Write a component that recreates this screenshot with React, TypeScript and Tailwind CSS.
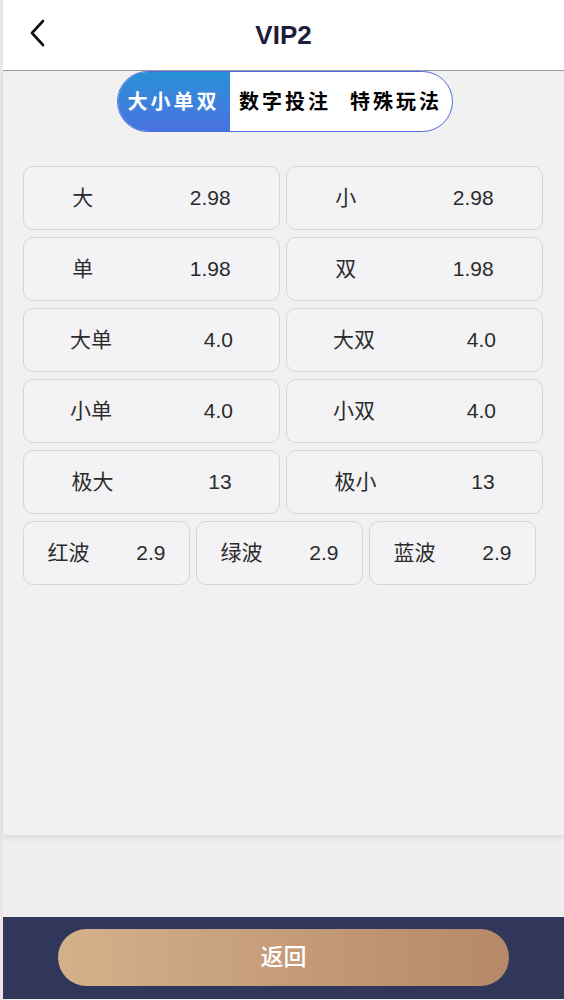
import React from "react";

const PAIRS: [string, string][][] = [
  [["大", "2.98"], ["小", "2.98"]],
  [["单", "1.98"], ["双", "1.98"]],
  [["大单", "4.0"], ["大双", "4.0"]],
  [["小单", "4.0"], ["小双", "4.0"]],
  [["极大", "13"], ["极小", "13"]],
];

const WAVES: [string, string][] = [
  ["红波", "2.9"],
  ["绿波", "2.9"],
  ["蓝波", "2.9"],
];

const FONT = { fontFamily: '"Liberation Sans", Arial, "Noto Sans CJK SC", sans-serif' };

function OddsCard({ label, odds, className }: { label: string; odds: string; className: string }) {
  return (
    <div
      className={`h-[64px] flex items-center justify-around bg-[#f3f3f5] border border-[#d6d6d6] rounded-[10px] text-[21px] text-[#2b2b2b] ${className}`}
    >
      <span>{label}</span>
      <span>{odds}</span>
    </div>
  );
}

export default function App() {
  const tabs = ["大小单双", "数字投注", "特殊玩法"];

  return (
    <div className="w-[564px] h-[1000px] flex flex-col border-l-[3px] border-[#eee3e8] bg-[#eeeeee]" style={FONT}>
      {/* header */}
      <div className="h-[71px] shrink-0 bg-white border-b border-[#9a9a9a] flex items-center relative">
        <button className="absolute left-[22px] top-[18px] w-[24px] h-[30px] flex items-center justify-center">
          <svg width="18" height="28" viewBox="0 0 18 28" fill="none">
            <path d="M15 2 L4 14 L15 26" stroke="#111" strokeWidth="2.6" strokeLinecap="round" strokeLinejoin="round" />
          </svg>
        </button>
        <h1 className="flex-1 text-center text-[26px] font-bold text-[#1e1e3c]">VIP2</h1>
      </div>

      {/* content */}
      <div className="h-[764px] shrink-0 bg-[#f1f1f1] shadow-[0_3px_6px_rgba(0,0,0,0.08)] flex flex-col items-center">
        <div className="flex h-[61px] rounded-full border border-[#4d6be0] bg-white overflow-hidden ml-[2px]">
          {tabs.map((t, i) => (
            <div
              key={t}
              className={
                i === 0
                  ? "w-[112px] flex items-center justify-center text-[20px] font-bold tracking-[3px] text-white bg-gradient-to-b from-[#2691d6] to-[#4872e0]"
                  : "w-[111px] flex items-center justify-center text-[20px] font-bold tracking-[3px] text-black"
              }
            >
              {t}
            </div>
          ))}
        </div>

        <div className="w-full px-5 mt-[34px] flex flex-col gap-[7px]">
          {PAIRS.map((row, r) => (
            <div key={r} className="flex gap-[6px]">
              {row.map(([l, o]) => (
                <OddsCard key={l} label={l} odds={o} className="w-[257px]" />
              ))}
            </div>
          ))}
          <div className="flex gap-[6px]">
            {WAVES.map(([l, o]) => (
              <OddsCard key={l} label={l} odds={o} className="w-[167px]" />
            ))}
          </div>
        </div>
      </div>

      <div className="flex-1" />

      {/* footer */}
      <div className="h-[82px] shrink-0 bg-[#30375a] flex items-start justify-center pt-[12px] mb-[1px]">
        <button className="w-[451px] h-[57px] rounded-full bg-gradient-to-r from-[#d4b18b] to-[#b5886a] text-white text-[23px] font-medium">
          返回
        </button>
      </div>
    </div>
  );
}
